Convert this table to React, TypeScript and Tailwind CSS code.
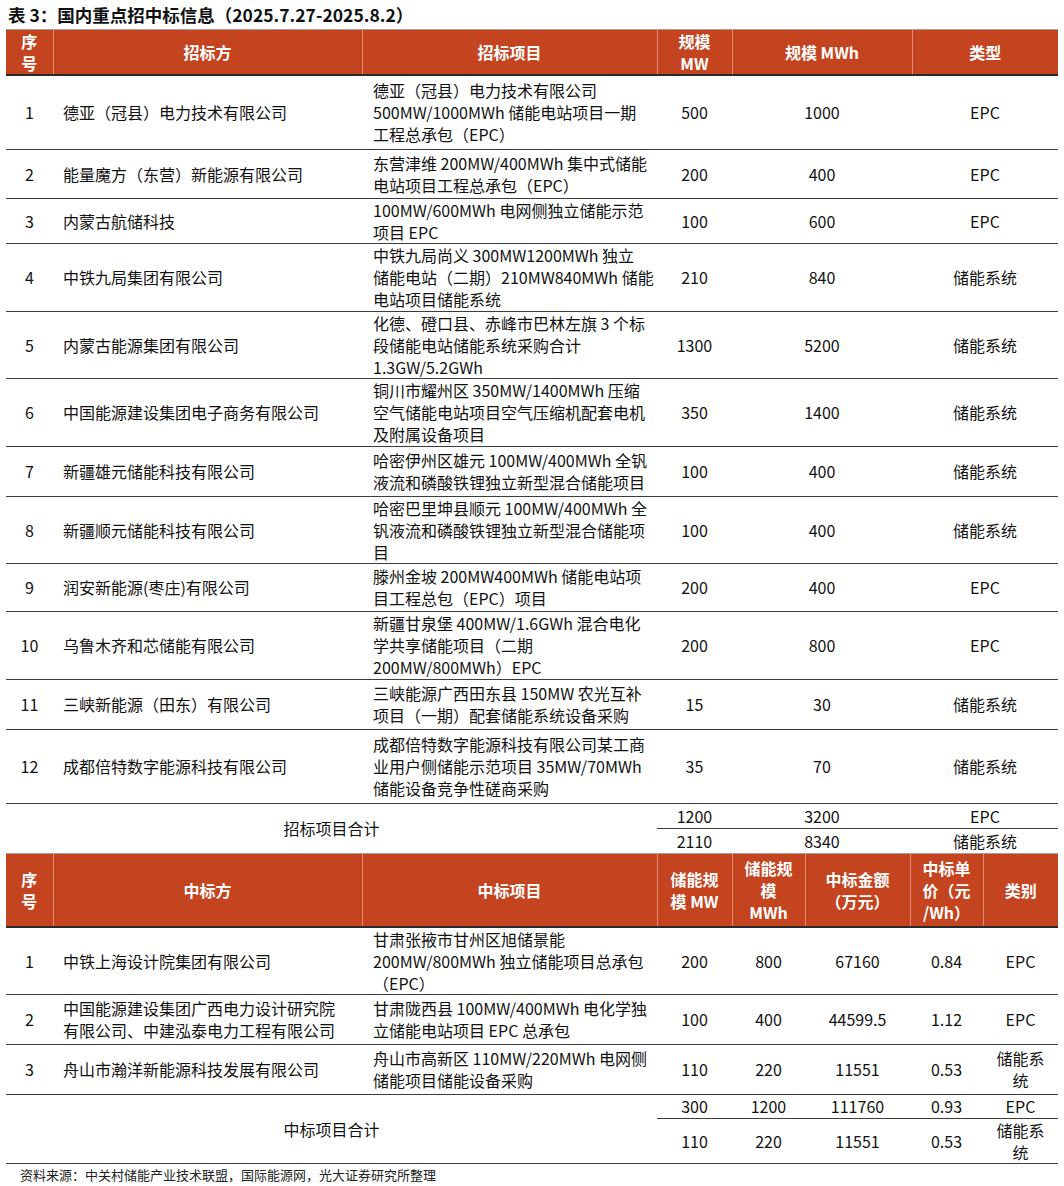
import React from "react";

type BidRow = {
  no: string;
  party: string[];
  project: string[];
  mw: string;
  mwh: string;
  kind: string[];
  h: string;
};

type WinRow = {
  no: string;
  party: string[];
  project: string[];
  mw: string;
  mwh: string;
  amount: string;
  price: string;
  kind: string[];
  h: string;
};

const bids: BidRow[] = [
  {
    no: "1",
    party: ["德亚（冠县）电力技术有限公司"],
    project: ["德亚（冠县）电力技术有限公司", "500MW/1000MWh 储能电站项目一期", "工程总承包（EPC）"],
    mw: "500",
    mwh: "1000",
    kind: ["EPC"],
    h: "h-[74px]",
  },
  {
    no: "2",
    party: ["能量魔方（东营）新能源有限公司"],
    project: ["东营津维 200MW/400MWh 集中式储能", "电站项目工程总承包（EPC）"],
    mw: "200",
    mwh: "400",
    kind: ["EPC"],
    h: "h-[49px]",
  },
  {
    no: "3",
    party: ["内蒙古航储科技"],
    project: ["100MW/600MWh 电网侧独立储能示范", "项目 EPC"],
    mw: "100",
    mwh: "600",
    kind: ["EPC"],
    h: "h-[45px]",
  },
  {
    no: "4",
    party: ["中铁九局集团有限公司"],
    project: ["中铁九局尚义 300MW1200MWh 独立", "储能电站（二期）210MW840MWh 储能", "电站项目储能系统"],
    mw: "210",
    mwh: "840",
    kind: ["储能系统"],
    h: "h-[68px]",
  },
  {
    no: "5",
    party: ["内蒙古能源集团有限公司"],
    project: ["化德、磴口县、赤峰市巴林左旗 3 个标", "段储能电站储能系统采购合计", "1.3GW/5.2GWh"],
    mw: "1300",
    mwh: "5200",
    kind: ["储能系统"],
    h: "h-[66px]",
  },
  {
    no: "6",
    party: ["中国能源建设集团电子商务有限公司"],
    project: ["铜川市耀州区 350MW/1400MWh 压缩", "空气储能电站项目空气压缩机配套电机", "及附属设备项目"],
    mw: "350",
    mwh: "1400",
    kind: ["储能系统"],
    h: "h-[68px]",
  },
  {
    no: "7",
    party: ["新疆雄元储能科技有限公司"],
    project: ["哈密伊州区雄元 100MW/400MWh 全钒", "液流和磷酸铁锂独立新型混合储能项目"],
    mw: "100",
    mwh: "400",
    kind: ["储能系统"],
    h: "h-[50px]",
  },
  {
    no: "8",
    party: ["新疆顺元储能科技有限公司"],
    project: ["哈密巴里坤县顺元 100MW/400MWh 全", "钒液流和磷酸铁锂独立新型混合储能项", "目"],
    mw: "100",
    mwh: "400",
    kind: ["储能系统"],
    h: "h-[65px]",
  },
  {
    no: "9",
    party: ["润安新能源(枣庄)有限公司"],
    project: ["滕州金坡 200MW400MWh 储能电站项", "目工程总包（EPC）项目"],
    mw: "200",
    mwh: "400",
    kind: ["EPC"],
    h: "h-[48px]",
  },
  {
    no: "10",
    party: ["乌鲁木齐和芯储能有限公司"],
    project: ["新疆甘泉堡 400MW/1.6GWh 混合电化", "学共享储能项目（二期", "200MW/800MWh）EPC"],
    mw: "200",
    mwh: "800",
    kind: ["EPC"],
    h: "h-[68px]",
  },
  {
    no: "11",
    party: ["三峡新能源（田东）有限公司"],
    project: ["三峡能源广西田东县 150MW 农光互补", "项目（一期）配套储能系统设备采购"],
    mw: "15",
    mwh: "30",
    kind: ["储能系统"],
    h: "h-[50px]",
  },
  {
    no: "12",
    party: ["成都倍特数字能源科技有限公司"],
    project: ["成都倍特数字能源科技有限公司某工商", "业用户侧储能示范项目 35MW/70MWh", "储能设备竞争性磋商采购"],
    mw: "35",
    mwh: "70",
    kind: ["储能系统"],
    h: "h-[74px]",
  },
];

const wins: WinRow[] = [
  {
    no: "1",
    party: ["中铁上海设计院集团有限公司"],
    project: ["甘肃张掖市甘州区旭储景能", "200MW/800MWh 独立储能项目总承包", "（EPC）"],
    mw: "200",
    mwh: "800",
    amount: "67160",
    price: "0.84",
    kind: ["EPC"],
    h: "h-[67px]",
  },
  {
    no: "2",
    party: ["中国能源建设集团广西电力设计研究院", "有限公司、中建泓泰电力工程有限公司"],
    project: ["甘肃陇西县 100MW/400MWh 电化学独", "立储能电站项目 EPC 总承包"],
    mw: "100",
    mwh: "400",
    amount: "44599.5",
    price: "1.12",
    kind: ["EPC"],
    h: "h-[50px]",
  },
  {
    no: "3",
    party: ["舟山市瀚洋新能源科技发展有限公司"],
    project: ["舟山市高新区 110MW/220MWh 电网侧", "储能项目储能设备采购"],
    mw: "110",
    mwh: "220",
    amount: "11551",
    price: "0.53",
    kind: ["储能系", "统"],
    h: "h-[50px]",
  },
];

function Lines({ items }: { items: string[] }) {
  return (
    <>
      {items.map((t, i) => (
        <React.Fragment key={i}>
          {i > 0 && <br />}
          {t}
        </React.Fragment>
      ))}
    </>
  );
}

const th = "border-r border-r-[#dc8a72] p-0 text-center font-bold text-white align-middle";
const thLast = "p-0 text-center font-bold text-white align-middle";
const td = "border-b border-b-[#3c3c3c] p-0 align-middle";
const tdTotal = "border-b border-b-[#3c3c3c] p-0 text-center align-middle";
const tdPlain = "p-0 text-center align-middle";

export default function App() {
  return (
    <div
      className="min-h-[1186px] w-[1064px] bg-white px-[6px] text-[16px] leading-[22px] text-[#111]"
      style={{ fontFamily: '"Noto Sans CJK SC", "Noto Sans", sans-serif' }}
    >
      <div className="flex h-[29px] items-center pl-[2px] text-[17.5px] font-bold leading-none">
        表 3：国内重点招中标信息（2025.7.27-2025.8.2）
      </div>

      <table className="w-[1052px] table-fixed border-collapse">
        <colgroup>
          <col className="w-[47px]" />
          <col className="w-[309px]" />
          <col className="w-[295px]" />
          <col className="w-[75px]" />
          <col className="w-[180px]" />
          <col className="w-[146px]" />
        </colgroup>
        <thead>
          <tr className="h-[43px] border-t border-t-[#a0a0a0] border-b-2 border-b-[#2a2a2a] bg-[#c4441f]">
            <th className={th}>
              <Lines items={["序", "号"]} />
            </th>
            <th className={th}>招标方</th>
            <th className={th}>招标项目</th>
            <th className={th}>
              <Lines items={["规模", "MW"]} />
            </th>
            <th className={th}>规模 MWh</th>
            <th className={thLast}>类型</th>
          </tr>
        </thead>
        <tbody>
          {bids.map((r) => (
            <tr key={r.no} className={r.h}>
              <td className={`${td} text-center`}>{r.no}</td>
              <td className={`${td} pl-[10px]`}>
                <Lines items={r.party} />
              </td>
              <td className={`${td} pl-[11px]`}>
                <Lines items={r.project} />
              </td>
              <td className={`${td} text-center`}>{r.mw}</td>
              <td className={`${td} text-center`}>{r.mwh}</td>
              <td className={`${td} text-center`}>
                <Lines items={r.kind} />
              </td>
            </tr>
          ))}
          <tr className="h-[25px]">
            <td colSpan={3} rowSpan={2} className={tdPlain}>
              招标项目合计
            </td>
            <td className={tdTotal}>1200</td>
            <td className={tdTotal}>3200</td>
            <td className={tdTotal}>EPC</td>
          </tr>
          <tr className="h-[25px]">
            <td className={tdPlain}>2110</td>
            <td className={tdPlain}>8340</td>
            <td className={tdPlain}>储能系统</td>
          </tr>
        </tbody>
      </table>

      <table className="w-[1052px] table-fixed border-collapse">
        <colgroup>
          <col className="w-[47px]" />
          <col className="w-[309px]" />
          <col className="w-[295px]" />
          <col className="w-[75px]" />
          <col className="w-[73px]" />
          <col className="w-[105px]" />
          <col className="w-[73px]" />
          <col className="w-[75px]" />
        </colgroup>
        <thead>
          <tr className="h-[73px] border-t border-t-[#a0a0a0] border-b-2 border-b-[#2a2a2a] bg-[#c4441f]">
            <th className={th}>
              <Lines items={["序", "号"]} />
            </th>
            <th className={th}>中标方</th>
            <th className={th}>中标项目</th>
            <th className={th}>
              <Lines items={["储能规", "模 MW"]} />
            </th>
            <th className={th}>
              <Lines items={["储能规", "模", "MWh"]} />
            </th>
            <th className={th}>
              <Lines items={["中标金额", "（万元）"]} />
            </th>
            <th className={th}>
              <Lines items={["中标单", "价（元", "/Wh）"]} />
            </th>
            <th className={thLast}>类别</th>
          </tr>
        </thead>
        <tbody>
          {wins.map((r) => (
            <tr key={r.no} className={r.h}>
              <td className={`${td} text-center`}>{r.no}</td>
              <td className={`${td} pl-[10px]`}>
                <Lines items={r.party} />
              </td>
              <td className={`${td} pl-[11px]`}>
                <Lines items={r.project} />
              </td>
              <td className={`${td} text-center`}>{r.mw}</td>
              <td className={`${td} text-center`}>{r.mwh}</td>
              <td className={`${td} text-center`}>{r.amount}</td>
              <td className={`${td} text-center`}>{r.price}</td>
              <td className={`${td} text-center`}>
                <Lines items={r.kind} />
              </td>
            </tr>
          ))}
          <tr className="h-[24px]">
            <td colSpan={3} rowSpan={2} className={`${td} text-center`}>
              中标项目合计
            </td>
            <td className={tdTotal}>300</td>
            <td className={tdTotal}>1200</td>
            <td className={tdTotal}>111760</td>
            <td className={tdTotal}>0.93</td>
            <td className={tdTotal}>EPC</td>
          </tr>
          <tr className="h-[44px]">
            <td className={`${td} text-center`}>110</td>
            <td className={`${td} text-center`}>220</td>
            <td className={`${td} text-center`}>11551</td>
            <td className={`${td} text-center`}>0.53</td>
            <td className={`${td} text-center`}>
              <Lines items={["储能系", "统"]} />
            </td>
          </tr>
        </tbody>
      </table>

      <div className="pl-[14px] pt-[1px] text-[13px] leading-[20px] text-[#222]">
        资料来源：中关村储能产业技术联盟，国际能源网，光大证券研究所整理
      </div>
    </div>
  );
}
